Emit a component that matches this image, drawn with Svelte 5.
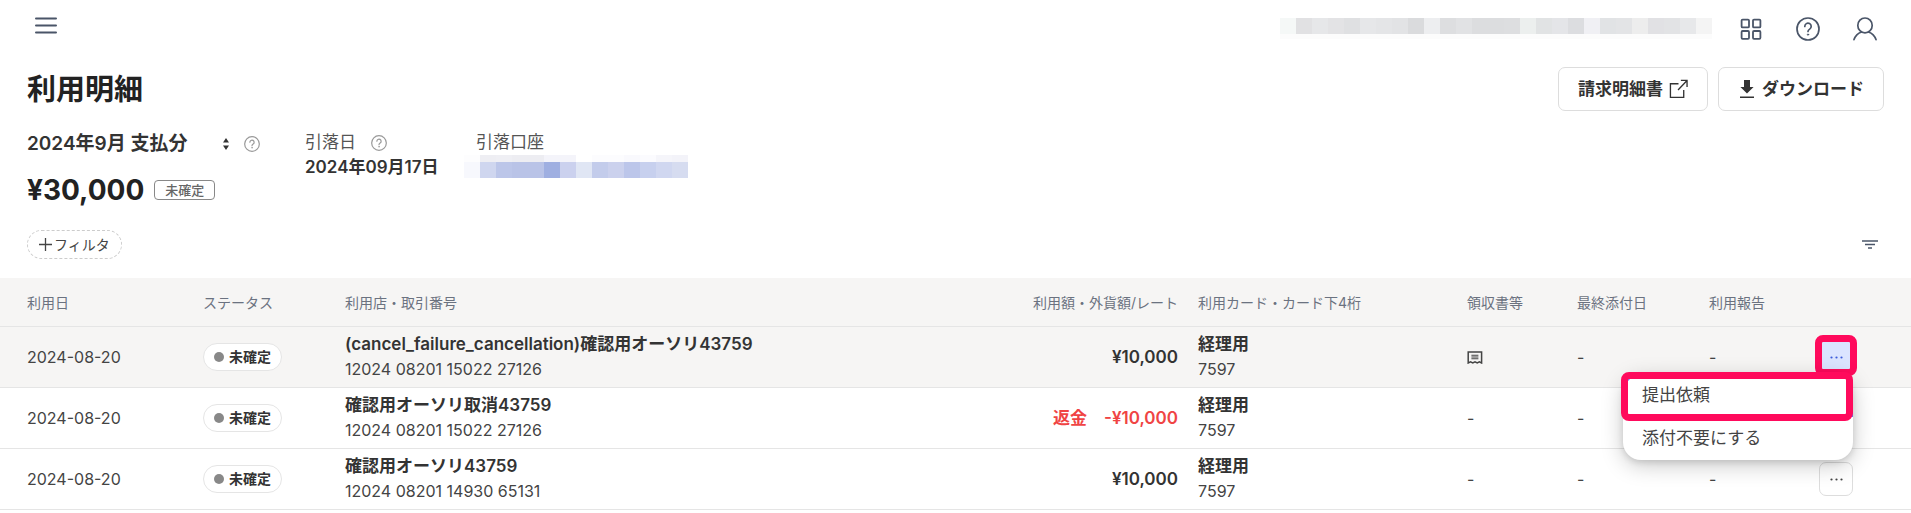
<script>
    const accountMosaic = [
        "#f7f8fd", "#cfd6ef", "#bcc6e9", "#b9c3e7", "#b9c3e7", "#9fafe1", "#cbd1ee",
        "#e0e6f4", "#c3cceb", "#cbd1ed", "#bcc6ea", "#c7d0ee", "#d0d7f0", "#d6dcf0",
    ];
    const accountMosaicEdge = [
        "#fdfdfe", "#eeeef3", "#efeff4", "#ededf2", "#ededf2", "#f4f4fa", "#f4f4fa",
        "#ffffff", "#fcfcfe", "#fcfcfe", "#f9f9fd", "#fbfbfe", "#f5f5fa", "#f3f3f9",
    ];
    const userMosaic = [
        "#f5f8f7", "#e1e1e3", "#e6e7e9", "#e3e3e5", "#dfe0e2", "#e6e7e9", "#e4e5e7", "#e2e3e5", "#dadbdd",
        "#edeef0", "#dddee0", "#e1e2e4", "#dcdddf", "#dcdddf", "#dddee0", "#ecefee", "#e1e3e4", "#e4e5e8",
        "#dcdde0", "#f0f0f4", "#e1e3e5", "#e3e4e6", "#ededed", "#e1e1e4", "#e2e3e5", "#e7e8ea", "#f4f4f4",
    ];

    const columns = [
        { key: "date", label: "利用日" },
        { key: "status", label: "ステータス" },
        { key: "store", label: "利用店・取引番号" },
        { key: "amount", label: "利用額・外貨額/レート" },
        { key: "card", label: "利用カード・カード下4桁" },
        { key: "receipt", label: "領収書等" },
        { key: "attached", label: "最終添付日" },
        { key: "report", label: "利用報告" },
        { key: "actions", label: "" },
    ];

    const rows = [
        {
            date: "2024-08-20",
            store: "(cancel_failure_cancellation)確認用オーソリ43759",
            number: "12024 08201 15022 27126",
            amount: "¥10,000",
            hasReceipt: true,
        },
        {
            date: "2024-08-20",
            store: "確認用オーソリ取消43759",
            number: "12024 08201 15022 27126",
            amount: "-¥10,000",
            refund: true,
        },
        {
            date: "2024-08-20",
            store: "確認用オーソリ43759",
            number: "12024 08201 14930 65131",
            amount: "¥10,000",
        },
    ];

    let openRow = $state(0);

    function toggleMenu(index) {
        openRow = openRow === index ? -1 : index;
    }
</script>

{#snippet helpIcon(size, stroke)}
    <svg width={size} height={size} viewBox="0 0 24 24" fill="none" stroke="currentColor" stroke-width={stroke} stroke-linecap="round">
        <circle cx="12" cy="12" r="11" />
        <path d="M8.8 9.4a3.2 3.2 0 1 1 4.9 2.7c-1.1.7-1.7 1.2-1.7 2.4" />
        <circle cx="12" cy="17.6" r=".7" fill="currentColor" stroke-width=".8" />
    </svg>
{/snippet}

<header class="topbar">
    <button class="icon-button" aria-label="メニュー">
        <svg width="22" height="17" viewBox="0 0 22 17" stroke="currentColor" stroke-width="2" stroke-linecap="round">
            <path d="M1 1.5h20M1 8.5h20M1 15.5h20" />
        </svg>
    </button>
    <div class="topbar-right">
        <div class="mosaic user-mosaic">
            {#each userMosaic as color}
                <span style="background: {color}"></span>
            {/each}
        </div>
        <button class="icon-button" aria-label="アプリ">
            <svg width="24" height="24" viewBox="0 0 24 24" fill="none" stroke="currentColor" stroke-width="1.8">
                <rect x="2.6" y="2.6" width="7.4" height="7.8" rx="1" />
                <rect x="14" y="2.6" width="7.4" height="7.8" rx="1" />
                <rect x="2.6" y="14" width="7.4" height="7.8" rx="1" />
                <rect x="14" y="14" width="7.4" height="7.8" rx="1" />
            </svg>
        </button>
        <button class="icon-button" aria-label="ヘルプ">{@render helpIcon(24, 1.7)}</button>
        <button class="icon-button" aria-label="アカウント">
            <svg width="24" height="24" viewBox="0 0 24 24" fill="none" stroke="currentColor" stroke-width="1.7" stroke-linecap="round">
                <ellipse cx="12" cy="8.4" rx="7.2" ry="7.4" />
                <path d="M1 22.6c1.2-3.6 4-6.4 7.6-7.6M23 22.6c-1.2-3.6-4-6.4-7.6-7.6" />
            </svg>
        </button>
    </div>
</header>

<main>
    <div class="title-row">
        <h1>利用明細</h1>
        <div class="title-actions">
            <button class="button">
                請求明細書
                <svg width="19" height="20" viewBox="0 0 20 20" fill="none" stroke="currentColor" stroke-width="1.4">
                    <path d="M10 4.5H1.5v14.3h14V11M9.5 11 19 1M12.5 1H19v7" />
                </svg>
            </button>
            <button class="button">
                <svg width="18" height="19" viewBox="0 0 18 19" fill="currentColor">
                    <path d="M6 0h6v7h3.6L9 13.6 2.4 7H6zM2 16.4h14V18H2z" />
                </svg>
                ダウンロード
            </button>
        </div>
    </div>

    <section class="summary">
        <div>
            <div class="period">
                <div class="period-select">
                    <select aria-label="支払月">
                        <option>2024年9月 支払分</option>
                    </select>
                    <svg width="6" height="12" viewBox="0 0 6 12" fill="currentColor">
                        <path d="M3 0l3 4.5H0zM3 12L0 7.5h6z" />
                    </svg>
                </div>
                <span class="help">{@render helpIcon(16, 1.8)}</span>
            </div>
            <div class="total">
                <strong>¥30,000</strong>
                <span class="badge">未確定</span>
            </div>
        </div>
        <dl>
            <dt>引落日 <span class="help">{@render helpIcon(16, 1.8)}</span></dt>
            <dd>2024年09月17日</dd>
        </dl>
        <dl>
            <dt>引落口座</dt>
            <dd class="account">
                <div class="mosaic edge">
                    {#each accountMosaicEdge as color}
                        <span style="background: {color}"></span>
                    {/each}
                </div>
                <div class="mosaic">
                    {#each accountMosaic as color}
                        <span style="background: {color}"></span>
                    {/each}
                </div>
            </dd>
        </dl>
    </section>

    <div class="toolbar">
        <button class="filter">
            <svg width="13" height="13" viewBox="0 0 13 13" stroke="currentColor" stroke-width="1.3">
                <path d="M6.5 0v13M0 6.5h13" />
            </svg>
            フィルタ
        </button>
        <button class="icon-button sort" aria-label="並び替え">
            <svg width="16" height="9" viewBox="0 0 16 9" stroke="currentColor" stroke-width="1.4">
                <path d="M0 1h16M3 4.5h10M6 8h4" />
            </svg>
        </button>
    </div>

    <table>
        <thead>
            <tr>
                {#each columns as column}
                    <th class={column.key} scope="col">{column.label}</th>
                {/each}
            </tr>
        </thead>
        <tbody>
            {#each rows as row, i}
                <tr class:active={openRow === i}>
                    <td class="date">{row.date}</td>
                    <td><span class="status"><i></i>未確定</span></td>
                    <td><b>{row.store}</b><br />{row.number}</td>
                    <td class="amount" class:refund={row.refund}>
                        {#if row.refund}<span>返金</span>{/if}{row.amount}
                    </td>
                    <td><b>経理用</b><br />7597</td>
                    <td>
                        {#if row.hasReceipt}
                            <svg width="16" height="13" viewBox="0 0 16 13" fill="none" stroke="currentColor" stroke-width="1.5">
                                <path d="M1.2 12V1h13.4v11l-2.2-1.2-2.2 1.2L8 10.8 5.8 12l-2.3-1.2z" />
                                <path d="M4.4 4.2h7M4.4 6h7M4.4 7.8h7" stroke-width="1.1" />
                            </svg>
                        {:else}-{/if}
                    </td>
                    <td>-</td>
                    <td>-</td>
                    <td>
                        <div class="action">
                            <button class="more" aria-label="操作" aria-expanded={openRow === i} onclick={() => toggleMenu(i)}>
                                <svg width="13" height="3" viewBox="0 0 13 3" fill="currentColor">
                                    <circle cx="1.5" cy="1.5" r="1.1" />
                                    <circle cx="6.5" cy="1.5" r="1.1" />
                                    <circle cx="11.5" cy="1.5" r="1.1" />
                                </svg>
                            </button>
                            {#if openRow === i}
                                <div class="menu">
                                    <button>提出依頼</button>
                                    <button>添付不要にする</button>
                                </div>
                            {/if}
                        </div>
                    </td>
                </tr>
            {/each}
        </tbody>
    </table>
</main>

<style>
    :global(body) {
        background: #fff;
        color: #333;
        font-family: Inter, "Noto Sans CJK JP", sans-serif;
        font-size: 17px;
        line-height: 25px;
    }

    button,
    select {
        padding: 0;
        border: 0;
        background: none;
        color: inherit;
        font: inherit;
        cursor: pointer;
    }

    svg {
        display: block;
        flex: none;
    }

    .topbar {
        display: flex;
        justify-content: space-between;
        align-items: flex-start;
        height: 67px;
        padding: 17px 34px 0 35px;
        box-sizing: border-box;
    }

    .topbar-right {
        display: flex;
        gap: 33px;
    }

    .icon-button {
        color: #4a5568;
    }

    .mosaic {
        display: flex;
    }

    .mosaic span {
        width: 16px;
        height: 16px;
    }

    .user-mosaic {
        height: 16px;
        margin: 1px -6px 0 0;
        border-bottom: 5px solid #fcfcfc;
    }

    .account {
        margin-left: -12px;
    }

    .edge span {
        height: 7px;
    }

    .title-row,
    .toolbar {
        display: flex;
        justify-content: space-between;
        align-items: center;
        margin: 0 27px;
    }

    h1 {
        margin: 0;
        color: #222;
        font-size: 29px;
        line-height: 43px;
    }

    .title-actions {
        display: flex;
        gap: 10px;
    }

    .button {
        display: flex;
        align-items: center;
        gap: 6px;
        height: 44px;
        padding: 0 19px;
        border: 1px solid #ddd;
        border-radius: 7px;
        font-weight: 600;
    }

    .summary {
        display: grid;
        grid-template-columns: 278px 171px auto;
        justify-content: start;
        margin: 19px 27px 0;
    }

    .period {
        display: flex;
        align-items: center;
        gap: 15px;
        height: 28px;
    }

    .period-select {
        display: grid;
        grid-template-columns: 202px;
        align-items: center;
    }

    .period-select > * {
        grid-area: 1 / 1;
    }

    .period-select svg {
        justify-self: end;
        pointer-events: none;
    }

    select {
        appearance: none;
        font-size: 19px;
        font-weight: 600;
        line-height: 28px;
    }

    .help {
        color: #999;
    }

    .total {
        display: flex;
        align-items: center;
        gap: 10px;
        margin-top: 14px;
    }

    .total strong {
        color: #222;
        font-size: 28px;
        line-height: 36px;
    }

    .badge {
        padding: 0 10px;
        border: 1px solid #888;
        border-radius: 4px;
        color: #666;
        font-size: 13px;
        font-weight: 500;
        line-height: 18px;
    }

    dl,
    dd {
        margin: 0;
    }

    dt {
        display: flex;
        align-items: center;
        gap: 15px;
        color: #555;
    }

    dd {
        font-weight: 600;
    }

    .toolbar {
        margin-top: 22px;
        margin-bottom: 19px;
    }

    .filter {
        display: flex;
        align-items: center;
        gap: 2px;
        padding: 0 11px;
        border: 1px dashed #ccc;
        border-radius: 15px;
        color: #444;
        font-size: 14px;
        line-height: 27px;
    }

    .sort {
        margin-right: 6px;
    }

    table {
        width: 100%;
        border-collapse: separate;
        border-spacing: 0;
        table-layout: fixed;
    }

    th,
    td {
        height: 60px;
        padding: 0 10px;
        border-bottom: 1px solid #e5e5e5;
        text-align: left;
    }

    th {
        height: 48px;
        background: #f6f5f4;
        color: #6b7280;
        font-size: 14px;
        font-weight: 400;
        white-space: nowrap;
    }

    td {
        color: #444;
        font-size: 16px;
    }

    b {
        color: #333;
        font-size: 17px;
        font-weight: 600;
    }

    .active td {
        background: #f6f5f4;
    }

    th.date {
        width: 166px;
    }

    .date {
        padding-left: 27px;
        padding-right: 0;
    }

    th.status {
        width: 122px;
    }

    th.amount {
        width: 233px;
    }

    th.card {
        width: 249px;
    }

    th.receipt {
        width: 90px;
    }

    th.attached {
        width: 112px;
    }

    th.report {
        width: 90px;
    }

    th.actions {
        width: 82px;
    }

    .amount {
        text-align: right;
    }

    td.amount {
        color: #333;
        font-size: 17px;
        font-weight: 600;
    }

    .amount span {
        margin-right: 17px;
    }

    td.refund {
        color: #f04444;
    }

    td .status {
        display: inline-flex;
        align-items: center;
        gap: 5px;
        padding: 0 10px;
        border: 1px solid #e5e5e5;
        border-radius: 14px;
        background: #fff;
        color: #333;
        font-size: 14px;
        font-weight: 600;
        line-height: 26px;
        vertical-align: middle;
    }

    .status i {
        width: 10px;
        height: 10px;
        border-radius: 50%;
        background: #888;
    }

    .action {
        position: relative;
        width: 34px;
    }

    .more {
        display: flex;
        align-items: center;
        justify-content: center;
        width: 34px;
        height: 34px;
        border: 1px solid #ddd;
        border-radius: 7px;
        background: #fff;
    }

    .more[aria-expanded="true"] {
        background: #dbe4ff;
        color: #3b5bdb;
    }

    .more[aria-expanded="true"]::after,
    .menu button:first-child::after {
        content: "";
        position: absolute;
        border: 7px solid #ff0a5c;
        border-radius: 8px;
        pointer-events: none;
    }

    .more[aria-expanded="true"]::after {
        inset: -5px -4px -2px -4px;
    }

    .menu button:first-child::after {
        inset: -2px 0 -4px -2px;
    }

    .menu {
        position: absolute;
        z-index: 1;
        top: 100%;
        right: 0;
        width: 230px;
        border-radius: 18px;
        background: #fff;
        box-shadow: 0 5px 22px rgba(0, 0, 0, 0.22), 0 2px 6px rgba(0, 0, 0, 0.12);
    }

    .menu button {
        position: relative;
        display: block;
        width: 100%;
        padding: 9px 19px;
        font-size: 17px;
        text-align: left;
    }

    .menu button:first-child {
        border-radius: 18px 18px 0 0;
        box-shadow: inset 0 0 0 1px #5b7cfa;
    }
</style>
